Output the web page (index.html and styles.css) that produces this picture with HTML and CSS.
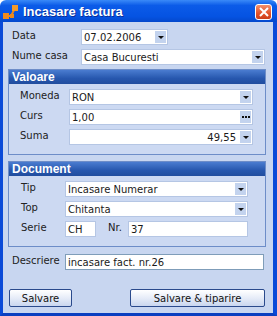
FILE: index.html
```html
<!DOCTYPE html>
<html lang="ro">
<head>
  <meta charset="UTF-8">
  <title>Incasare factura</title>
  <link rel="stylesheet" href="styles.css">
</head>
<body>
  <div class="window">
    <!-- Title bar -->
    <div class="titlebar">
      <svg class="app-icon" width="16" height="16" viewBox="0 0 16 16">
        <path d="M4 12 L8 12 L12 4" stroke="#f08a1c" stroke-width="2" fill="none"/>
        <rect x="9" y="1" width="6" height="6" fill="#f59a2a"/>
        <rect x="0" y="9" width="6" height="6" fill="#f08a1c"/>
        <rect x="7" y="10" width="4" height="4" fill="#f08a1c"/>
      </svg>
      <span class="title">Incasare factura</span>
      <span class="close">
        <svg width="10" height="10" viewBox="0 0 10 10">
          <path d="M1 1 L9 9 M9 1 L1 9" stroke="#fff" stroke-width="2"/>
        </svg>
      </span>
    </div>

    <div class="frame">
      <div class="row">
        <span class="lbl top-lbl">Data</span>
        <div class="field date"><span class="val">07.02.2006</span><span class="drop"></span></div>
      </div>
      <div class="row">
        <span class="lbl top-lbl">Nume casa</span>
        <div class="field wide"><span class="val">Casa Bucuresti</span><span class="drop"></span></div>
      </div>

      <!-- Valoare -->
      <div class="group">
        <div class="group-head">Valoare</div>
        <div class="group-body valoare">
          <div class="row">
            <span class="lbl">Moneda</span>
            <div class="field full"><span class="val">RON</span><span class="drop"></span></div>
          </div>
          <div class="row">
            <span class="lbl">Curs</span>
            <div class="field full"><span class="val">1,00</span><span class="dots"><i></i><i></i><i></i></span></div>
          </div>
          <div class="row">
            <span class="lbl">Suma</span>
            <div class="field full"><span class="val right">49,55</span><span class="drop"></span></div>
          </div>
        </div>
      </div>

      <!-- Document -->
      <div class="group">
        <div class="group-head">Document</div>
        <div class="group-body document">
          <div class="row">
            <span class="lbl">Tip</span>
            <div class="field full"><span class="val">Incasare Numerar</span><span class="drop"></span></div>
          </div>
          <div class="row">
            <span class="lbl">Top</span>
            <div class="field full"><span class="val">Chitanta</span><span class="drop"></span></div>
          </div>
          <div class="row">
            <span class="lbl">Serie</span>
            <div class="field serie"><span class="val">CH</span></div>
            <span class="nr">Nr.</span>
            <div class="field numar"><span class="val">37</span></div>
          </div>
        </div>
      </div>

      <div class="row descriere">
        <span class="lbl top-lbl desc-lbl">Descriere</span>
        <div class="field desc"><span class="val">incasare fact. nr.26</span></div>
      </div>

      <div class="buttons">
        <button class="btn save">Salvare</button>
        <button class="btn print">Salvare &amp; tiparire</button>
      </div>
    </div>
  </div>
</body>
</html>
```

FILE: styles.css
```css
body {
  margin: 0;
  padding: 0;
  font-family: "DejaVu Sans", Verdana, sans-serif;
  font-size: 10px;
  color: #1a1a1a;
}
.window {
  width: 277px;
  height: 316px;
  display: flex;
  flex-direction: column;
}
.titlebar {
  height: 22px;
  display: flex;
  align-items: center;
  background: linear-gradient(#3a8af8 0%, #0b5be8 25%, #0553e2 75%, #0448cc 100%);
  border-radius: 6px 6px 0 0;
  position: relative;
}
.app-icon {
  margin-left: 3px;
  margin-top: 1px;
}
.title {
  font-family: "Liberation Sans", Arial, sans-serif;
  font-weight: bold;
  font-size: 13px;
  color: #fff;
  margin-left: 4px;
  text-shadow: 1px 1px 0 #0a2f9a;
}
.close {
  position: absolute;
  right: 5px;
  top: 4px;
  width: 17px;
  height: 16px;
  border: 1px solid #fff;
  border-radius: 3px;
  background: linear-gradient(#f3906c, #e2522a 60%, #cc3f1a);
  display: flex;
  align-items: center;
  justify-content: center;
  box-sizing: border-box;
}
.frame {
  flex: 1;
  background: #c8d6f0;
  border-left: 3px solid #0a4ad8;
  border-right: 4px solid #0a4ad8;
  border-bottom: 3px solid #0a3fc0;
  padding: 7px 6px 0 5px;
}
.row {
  display: flex;
  align-items: center;
  height: 16px;
  margin-bottom: 4px;
}
.lbl {
  color: #222;
  margin-top: -3px;
}
.top-lbl {
  width: 69px;
  padding-left: 4px;
}
.field {
  height: 16px;
  background: #fff;
  border: 1px solid #b5c6e4;
  box-sizing: border-box;
  display: flex;
  align-items: center;
}
.val {
  flex: 1;
  padding-left: 2px;
  white-space: nowrap;
}
.val.right {
  text-align: right;
  padding-right: 4px;
}
.drop, .dots {
  width: 11px;
  height: 12px;
  margin-right: 1px;
  background: #c3d3ee;
  position: relative;
}
.drop::after {
  content: "";
  position: absolute;
  left: 3px;
  top: 5px;
  border-left: 3px solid transparent;
  border-right: 3px solid transparent;
  border-top: 3px solid #111;
}
.dots {
  display: flex;
  align-items: center;
  justify-content: center;
  gap: 1px;
}
.dots i {
  width: 2px;
  height: 2px;
  background: #111;
}
.date {
  width: 87px;
}
.wide {
  width: 184px;
}
.group {
  border: 1px solid #6d8dc8;
  background: #ccd9f2;
  margin-top: 3px;
  margin-right: 1px;
}
.group + .group {
  margin-top: 6px;
}
.group-head {
  height: 14px;
  background: linear-gradient(#4a7cd0, #2757ae 60%, #214d9e);
  color: #fff;
  font-family: "Liberation Sans", Arial, sans-serif;
  font-weight: bold;
  font-size: 12px;
  line-height: 14px;
  padding-left: 3px;
}
.group-body {
  padding: 5px 12px 5px 11px;
}
.group-body .row:last-child {
  margin-bottom: 4px;
}
.valoare .lbl {
  width: 49px;
}
.document .lbl {
  width: 44px;
  padding-left: 2px;
  margin-left: -1px;
}
.full {
  flex: 1;
}
.document .full {
  flex: none;
  width: 183px;
}
.serie {
  width: 31px;
}
.nr {
  margin-left: 12px;
  width: 20px;
  margin-top: -3px;
}
.numar {
  width: 120px;
}
.descriere {
  margin-top: 7px;
}
.desc-lbl {
  width: 53px;
}
.desc {
  width: 199px;
  border-color: #7f9db9;
}
.buttons {
  display: flex;
  justify-content: space-between;
  margin-top: 19px;
  padding-left: 1px;
  padding-right: 2px;
}
.btn {
  height: 18px;
  font-family: "DejaVu Sans", Verdana, sans-serif;
  font-size: 10px;
  color: #111;
  background: linear-gradient(#ffffff, #e6ecf8 50%, #c9d6ef);
  border: 1px solid #2a4a8c;
  border-radius: 2px;
  padding: 0;
}
.save {
  width: 63px;
}
.print {
  width: 135px;
}
```
